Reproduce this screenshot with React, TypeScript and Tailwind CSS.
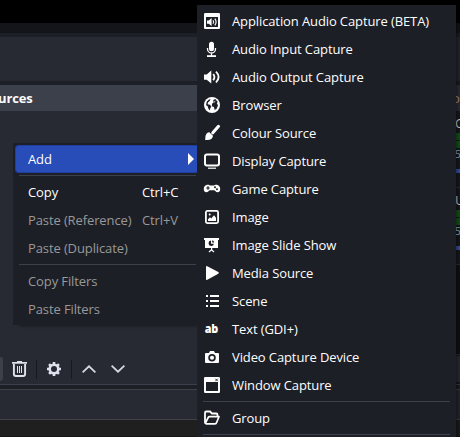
import type { ReactNode } from "react";

const Svg = ({ children }: { children: ReactNode }) => (
  <svg width="16" height="16" viewBox="0 0 16 16" fill="none" stroke="none" className="shrink-0 overflow-visible">
    {children}
  </svg>
);

const W = "#fefefe";
const D = "#1d1f26";

const sources: { label: string; icon: ReactNode }[] = [
  {
    label: "Application Audio Capture (BETA)",
    icon: (
      <>
        <rect width="16" height="16" rx="1.2" fill={W} />
        <rect x="2" y="4" width="12" height="10" fill={D} />
        <path d="M3 7.5h1.7L7.6 5v8L4.7 10.7H3z" fill={W} />
        <path d="M9 7.2q1.3 1.8 0 3.6M10.8 5.6q2.6 3.4 0 6.8" stroke={W} strokeWidth="1.1" />
      </>
    ),
  },
  {
    label: "Audio Input Capture",
    icon: (
      <>
        <rect x="5" y="0.8" width="5" height="9.4" rx="2.5" fill={W} />
        <path d="M3.5 7v1a4 4 0 0 0 8 0V7M7.5 12v3" stroke={W} strokeWidth="1.3" />
        <rect x="3" y="14.2" width="9" height="1.8" fill={W} />
      </>
    ),
  },
  {
    label: "Audio Output Capture",
    icon: (
      <>
        <path d="M0 5.5h2.7L7.3 1.4v13.2L2.7 10.7H0z" fill={W} />
        <path d="M9.2 5q2.4 3 0 6.2M12 2.6q5.2 5.4 0 10.9" stroke={W} strokeWidth="1.8" />
      </>
    ),
  },
  {
    label: "Browser",
    icon: (
      <>
        <circle cx="8" cy="8" r="8" fill={W} />
        <path d="M2.8 4.6 5 2.6 6.6 2.2 5.6 4 4 5.600 3.600 7.200 6 7.800 7.300 9.400 6.300 11.300 5.800 13.600 4.300 11.500 3.800 9.600 2 8zM9.300 3.100l2-1 2.500 3-1 .9 1.200 2.400-1.400 3.300-1.900 1.300-.8-3-2-.8.100-2.400 1.500-1.300z" fill={D} />
        <path d="M9.800 5.300l1.500-.9" stroke={W} strokeWidth=".9" />
      </>
    ),
  },
  {
    label: "Colour Source",
    icon: (
      <>
        <path d="M14.500 1.300 8.800 7.800" stroke={W} strokeWidth="3.100" strokeLinecap="round" />
        <path d="M5.300 7.200 9 10.800C8.800 14 6 15.600 1 15c.7-1 .1-2.300.5-4.100.5-2.300 2-3.500 3.800-3.700z" fill={W} />
      </>
    ),
  },
  {
    label: "Display Capture",
    icon: (
      <>
        <rect x="1" y="1.500" width="14" height="11" rx="2" stroke={W} strokeWidth="2" />
        <path d="M4 15.200h8" stroke={W} strokeWidth="1.200" />
      </>
    ),
  },
  {
    label: "Game Capture",
    icon: (
      <>
        <path d="M4 3.800c1 0 1.300.7 2.200.7h3.600c.9 0 1.200-.7 2.200-.7 3 0 4.200 2.200 4.200 4.400 0 1.700-1.100 3.100-2.500 3.100-1.900 0-2.600-2-3.700-2H6c-1.100 0-1.800 2-3.700 2C.9 11.300-.2 9.900-.2 8.200-.2 6 1 3.800 4 3.800z" fill={W} />
        <path d="M2.300 7h3.400M4 5.300v3.400" stroke={D} strokeWidth="1.200" />
        <circle cx="11" cy="6.300" r="1" fill={D} />
        <circle cx="13" cy="8.300" r="1" fill={D} />
      </>
    ),
  },
  {
    label: "Image",
    icon: (
      <>
        <rect x="1.900" y="1.900" width="12.200" height="12.200" rx="1.500" stroke={W} strokeWidth="1.800" />
        <path d="M4 12V10.200L6 8.200l1.200 1.200L10 6.300l2 2.400V12z" fill={W} />
        <circle cx="5.700" cy="5.600" r="1" fill={W} />
      </>
    ),
  },
  {
    label: "Image Slide Show",
    icon: (
      <>
        <path d="M0 1h15v2h-1v8H1V3H0zM7 11h1.200v2H7z" fill={W} />
        <path d="m5 15 2.500-2.300L10 15" stroke={W} strokeWidth="1.200" />
        <path d="M7 3.600V6.700h2.900A2.700 2.700 0 1 1 7 3.600z" fill={D} />
        <path d="M8.200 3.300q2 .2 2 2.200h-2z" fill={D} />
      </>
    ),
  },
  {
    label: "Media Source",
    icon: <path d="M2 2q0-1.600 1.300-.8L14.300 7q1.200.9 0 1.700L3.300 14.800Q2 15.500 2 14z" fill={W} />,
  },
  {
    label: "Scene",
    icon: (
      <path d="M2 2h2v2H2zM6 2h9v2H6zM2 7h2v2H2zM6 7h9v2H6zM2 12h2v2H2zM6 12h9v2H6z" fill={W} />
    ),
  },
  {
    label: "Text (GDI+)",
    icon: (
      <text x="0.7" y="12" fill={W} fontSize="12" fontWeight="800" fontFamily="Open Sans, sans-serif" textLength="13.500" lengthAdjust="spacingAndGlyphs">
        ab
      </text>
    ),
  },
  {
    label: "Video Capture Device",
    icon: (
      <>
        <path d="M2 4h3l1-2h4l1 2h3q1 0 1 1v8q0 1-1 1H2q-1 0-1-1V5q0-1 1-1z" fill={W} />
        <circle cx="8" cy="8.800" r="2.900" stroke={D} strokeWidth="1.700" />
      </>
    ),
  },
  {
    label: "Window Capture",
    icon: (
      <>
        <rect width="16" height="16" rx="1.200" fill={W} />
        <rect x="2" y="5" width="12" height="9" fill={D} />
        <path d="m11.300 1.700 2.500 2.500M13.800 1.700l-2.500 2.500" stroke={D} strokeWidth=".9" />
      </>
    ),
  },
];

const groupIcon = (
  <>
    <path d="M1 13V2.800Q1 1.500 2.300 1.500H6L8 3.500h4.200q1.300 0 1.300 1.300V6" stroke={W} strokeWidth="1.800" />
    <path d="M1.300 13.300 4.200 7.500Q4.600 6.700 5.500 6.700H15L12.600 12.500q-.4 1.300-1.600 1.300H2.200z" stroke={W} strokeWidth="1.700" strokeLinejoin="round" />
  </>
);

function SourceRow({ label, icon }: { label: string; icon: ReactNode }) {
  return (
    <div className="flex h-7 items-center gap-3 pl-[7px] text-[#fefefe]">
      <Svg>{icon}</Svg>
      <span className="whitespace-nowrap">{label}</span>
    </div>
  );
}

function ContextRow({ label, shortcut, disabled }: { label: string; shortcut?: string; disabled?: boolean }) {
  return (
    <div className={`flex h-7 items-center pl-[15px] ${disabled ? "text-[#999999]" : "text-[#fefefe]"}`}>
      <span className="w-[114px] whitespace-nowrap">{label}</span>
      <span>{shortcut}</span>
    </div>
  );
}

const Rule = ({ className }: { className: string }) => <div className={`h-px bg-[#3c404b] ${className}`} />;

function Channel({ letter }: { letter: string }) {
  return (
    <div className="flex h-[77px] flex-col overflow-hidden border-b border-[#30323a]">
      <div className="h-[21px] pt-[3px] text-[13px] leading-[18px] text-[#e4e4e4]">
        <span className="-ml-px">{letter}</span>
      </div>
      <div className="mt-px h-[7px] bg-[#165a1b]" />
      <div className="mt-px h-[7px] bg-[#165a1b]" />
      <div className="h-[21px] text-[10px] leading-[13px] text-[#9cc4dd]">
        <span className="-ml-px">50</span>
      </div>
      <div className="h-1 shrink-0 bg-[#3c57b5]" />
    </div>
  );
}

export default function App() {
  return (
    <div className="relative h-[437px] w-[460px] overflow-hidden bg-[#1d1f26] font-['Open_Sans','Noto_Sans',sans-serif] text-[13px] leading-[18px] tracking-[-0.11px]">
      <div className="h-[23px] bg-black" />
      <div className="h-[10px] bg-[#14151a]" />
      <div className="mt-1 h-11 bg-[#272a33]" />
      <div className="mt-1 flex h-[300px]">
        <section className="flex w-[456px] flex-col border-b border-[#3c404b] bg-[#272a33]">
          <h2 className="flex h-[26px] items-center bg-[#3c404b] text-[13px] font-bold text-[#fefefe]">
            <span className="-ml-[17px]">Sources</span>
          </h2>
          <div className="flex-1" />
          <div className="flex h-[26px] items-center">
            <div className="h-6 w-[3px] rounded-r bg-[#3c404b]" />
            <svg className="ml-[9px]" width="15" height="16" viewBox="0 0 15 16" fill="none" stroke="#dfe2ec">
              <path d="M0 1.900h15M5 .6h5" strokeWidth="1.600" />
              <path d="M1.900 3v10q0 2 2 2h7.200q2 0 2-2V3" strokeWidth="1.900" />
              <path d="M5.500 5v7M7.500 5v7M9.500 5v7" strokeWidth="1" />
            </svg>
            <div className="ml-[9px] h-[19px] w-px bg-[#17191e]" />
            <svg className="ml-2.5" width="14" height="14" viewBox="0 0 14 14" fill="none" stroke="#dfe2ec">
              <circle cx="7" cy="7" r="4.300" strokeWidth="2.600" />
              <path d="M7 0v3M7 11v3M0 7h3M11 7h3M2.050 2.050l2 2M9.950 9.950l2 2M2.050 11.950l2-2M9.950 4.050l2-2" strokeWidth="2.600" />
            </svg>
            <div className="ml-2.5 h-[19px] w-px bg-[#17191e]" />
            <svg className="ml-2.5" width="14" height="8" viewBox="0 0 14 8" fill="none" stroke="#d5d8e1" strokeWidth="1.800">
              <path d="m.6 7.300 6.400-6 6.400 6" />
            </svg>
            <svg className="ml-[15px]" width="14" height="8" viewBox="0 0 14 8" fill="none" stroke="#d5d8e1" strokeWidth="1.800">
              <path d="m.6.7 6.400 6 6.400-6" />
            </svg>
          </div>
          <div className="h-0.5" />
        </section>
        <aside className="flex w-1 flex-col overflow-hidden border-b border-[#3c404b] bg-[#191b21]">
          <div className="h-[26px] bg-[#30333d] pt-1 text-[13px] text-[#c9a27d]">
            <span className="-ml-1">o</span>
          </div>
          <Channel letter="C" />
          <Channel letter="U" />
          <div className="h-[89px] bg-[#111317]" />
          <div className="h-px bg-[#30323a]" />
          <div className="mt-[1px] h-[26px] bg-[#2c2f38]" />
        </aside>
      </div>
      <div className="mt-1 h-[31px] border-y border-[#414148] bg-[#272a33]" />
      <div className="h-[17px] border-b border-[#151515] bg-[#1f1f1f]" />

      <div className="absolute left-[13px] top-[143px] h-[182px] w-[184px] bg-[#1d1f26] shadow-[4px_3px_3px_-2px_rgba(0,0,0,0.4)]">
        <div className="ml-0.5 mt-0.5 flex h-7 items-center justify-between rounded-l border border-r-0 border-[#203da0] bg-[#284cb8] pl-3 pr-[3px] text-[#fefefe]">
          <span>Add</span>
          <svg width="6" height="12" viewBox="0 0 6 12" fill={W}>
            <path d="m0 0 6 6-6 6z" />
          </svg>
        </div>
        <Rule className="ml-1.5 mr-[1px] mt-0.5" />
        <div className="pt-0.5">
          <ContextRow label="Copy" shortcut="Ctrl+C" />
          <ContextRow label="Paste (Reference)" shortcut="Ctrl+V" disabled />
          <ContextRow label="Paste (Duplicate)" disabled />
        </div>
        <Rule className="ml-1.5 mr-[1px] mt-0.5" />
        <div className="pt-0.5">
          <ContextRow label="Copy Filters" disabled />
          <ContextRow label="Paste Filters" disabled />
        </div>
      </div>

      <div className="absolute left-[197px] top-[5px] h-[432px] w-[259px] bg-[#1d1f26] pt-0.5 shadow-[4px_3px_4px_-1px_rgba(0,0,0,0.45)]">
        {sources.map((s) => (
          <SourceRow key={s.label} label={s.label} icon={s.icon} />
        ))}
        <Rule className="ml-1.5 mr-1.5 mt-0.5" />
        <div className="pt-0.5">
          <SourceRow label="Group" icon={groupIcon} />
        </div>
        <Rule className="ml-1.5 mr-1.5 mt-0.5" />
      </div>
    </div>
  );
}
